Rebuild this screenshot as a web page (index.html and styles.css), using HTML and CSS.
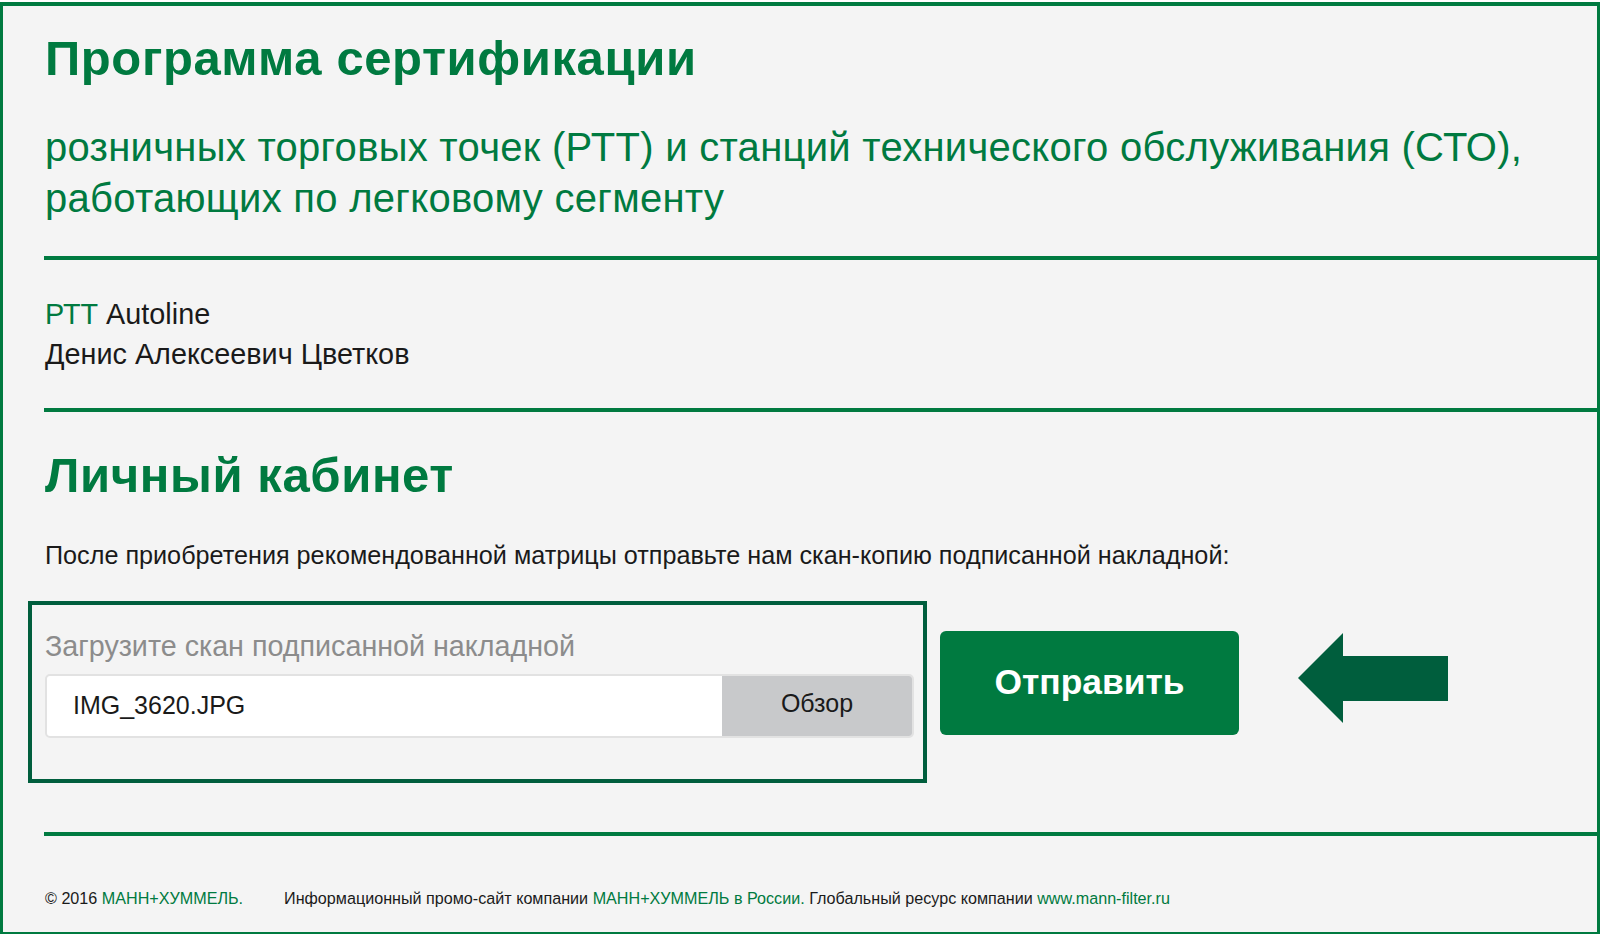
FILE: index.html
```html
<!DOCTYPE html>
<html>

<head>
    <meta charset="utf-8">
    <title>Личный кабинет</title>
    <link rel="stylesheet" href="styles.css">
</head>

<body>
    <div class="page">
        <section class="intro">
            <h1 class="title">Программа сертификации</h1>
            <p class="subtitle">розничных торговых точек (РТТ) и станций технического обслуживания (СТО),<br>работающих по легковому сегменту</p>
        </section>
        <section class="owner">
            <div><span class="green">РТТ</span> Autoline</div>
            <div>Денис Алексеевич Цветков</div>
        </section>
        <section class="cabinet">
            <h2 class="title">Личный кабинет</h2>
            <p class="note">После приобретения рекомендованной матрицы отправьте нам скан-копию подписанной накладной:</p>
            <div class="upload-row">
                <div class="upload-box">
                    <div class="upload-label">Загрузите скан подписанной накладной</div>
                    <div class="file-field">
                        <div class="file-name">IMG_3620.JPG</div>
                        <div class="file-btn">Обзор</div>
                    </div>
                </div>
                <button class="send-btn">Отправить</button>
                <svg class="arrow" width="150" height="90" viewBox="0 0 150 90">
                    <path d="M0 45 L45 0 V23 H150 V68 H45 V90 Z" fill="#005e3d" />
                </svg>
            </div>
        </section>
        <footer class="footer">
            <span>© 2016 <span class="green">МАНН+ХУММЕЛЬ.</span></span>
            <span>Информационный промо-сайт компании <span class="green">МАНН+ХУММЕЛЬ в России.</span> Глобальный ресурс компании <span class="green">www.mann-filter.ru</span></span>
        </footer>
    </div>
</body>

</html>
```

FILE: styles.css
```css
* {
    box-sizing: border-box;
}

body {
    margin: 0;
    background-color: #fff;
    font-family: "Liberation Sans", Arial, sans-serif;
}

.page {
    height: 932px;
    margin-top: 2px;
    border: 3px solid #007a40;
    border-top-width: 4px;
    border-bottom-width: 2px;
    background-color: #f4f4f4;
    padding-left: 41px;
    color: #1a1a1a;
}

.green {
    color: #007a40;
}

.title {
    margin: 0;
    font-size: 49px;
    line-height: 52px;
    font-weight: bold;
    color: #007a40;
    letter-spacing: 0.6px;
}

.intro,
.owner,
.cabinet {
    padding-left: 1px;
    border-bottom: 4px solid #007a40;
}

.intro {
    height: 254px;
    padding-top: 26px;
}

.subtitle {
    margin: 38px 0 0;
    font-size: 40px;
    line-height: 51px;
    color: #007a40;
    letter-spacing: 0.28px;
}

.owner {
    height: 152px;
    padding-top: 34px;
    font-size: 28.8px;
    line-height: 40px;
}

.cabinet {
    height: 424px;
    padding-top: 37px;
}

.note {
    margin: 39px 0 0;
    font-size: 25.2px;
    line-height: 30px;
}

.upload-row {
    display: flex;
    align-items: flex-start;
    margin: 31px 0 0 -17px;
}

.upload-box {
    width: 899px;
    height: 182px;
    padding: 25px 9px 0 13px;
    border: 4px solid #005e3d;
}

.upload-label {
    font-size: 28.7px;
    line-height: 32px;
    color: #8c8c8c;
}

.file-field {
    display: flex;
    height: 64px;
    margin-top: 12px;
    border: 2px solid #e2e2e2;
    border-radius: 5px;
    background-color: #fff;
    overflow: hidden;
    font-size: 25px;
}

.file-name {
    flex: 1;
    padding-left: 26px;
    line-height: 59px;
}

.file-btn {
    width: 190px;
    background-color: #c8c9cb;
    text-align: center;
    line-height: 55px;
}

.send-btn {
    width: 299px;
    height: 104px;
    margin: 30px 0 0 13px;
    border: none;
    border-radius: 6px;
    background-color: #007a40;
    color: #fff;
    font-family: inherit;
    font-size: 35.4px;
    font-weight: bold;
    padding-bottom: 2px;
}

.arrow {
    margin: 32px 0 0 59px;
}

.footer {
    display: flex;
    gap: 41px;
    padding-top: 53px;
    padding-left: 1px;
    font-size: 16.15px;
    line-height: 18px;
}
```
